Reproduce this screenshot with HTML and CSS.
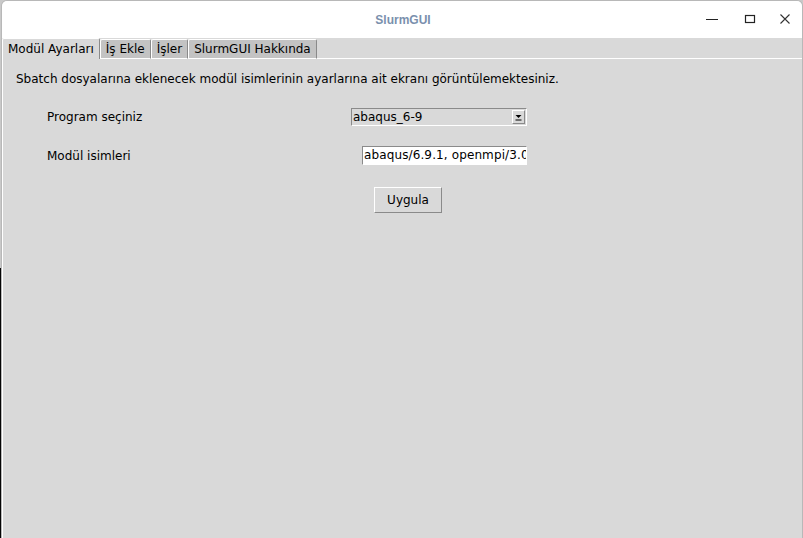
FILE: index.html
```html
<!DOCTYPE html>
<html lang="tr">
<head>
<meta charset="utf-8">
<link rel="stylesheet" href="styles.css">
</head>
<body>
<div class="window">
  <div class="titlebar">
    <div class="title">SlurmGUI</div>
    <div class="controls">
      <svg class="ctl ctl-min" width="14" height="14" viewBox="0 0 14 14"><path d="M1 7.5H13" stroke="#222" stroke-width="1.2"/></svg>
      <svg class="ctl ctl-max" width="14" height="14" viewBox="0 0 14 14"><rect x="2.5" y="3.5" width="9" height="7" fill="none" stroke="#222" stroke-width="1.2"/></svg>
      <svg class="ctl" width="14" height="14" viewBox="0 0 14 14"><path d="M2.5 2.5L11.5 11.5M11.5 2.5L2.5 11.5" stroke="#333" stroke-width="1.1"/></svg>
    </div>
  </div>
  <div class="tabs">
    <div class="tab active">Modül Ayarları</div>
    <div class="tab">İş Ekle</div>
    <div class="tab">İşler</div>
    <div class="tab">SlurmGUI Hakkında</div>
    <div class="tabfill"></div>
  </div>
  <div class="panel">
    <p class="intro">Sbatch dosyalarına eklenecek modül isimlerinin ayarlarına ait ekranı görüntülemektesiniz.</p>
    <div class="row row1">
      <span class="label">Program seçiniz</span>
      <div class="combo">
        <span class="combo-text">abaqus_6-9</span>
        <span class="combo-btn"><svg width="9" height="8" viewBox="0 0 9 8"><path d="M1.5 2H7.5L4.5 5Z" fill="#000"/><path d="M1.5 7H7.5" stroke="#000" stroke-width="1"/></svg></span>
      </div>
    </div>
    <div class="row row2">
      <span class="label">Modül isimleri</span>
      <div class="entry">abaqus/6.9.1, openmpi/3.0</div>
    </div>
    <div class="btnrow">
      <div class="button">Uygula</div>
    </div>
  </div>
</div>
</body>
</html>
```
FILE: styles.css
```css
html, body {
  margin: 0;
  padding: 0;
}
body {
  width: 803px;
  height: 538px;
  overflow: hidden;
  background: linear-gradient(#c9c9c9 0, #c9c9c9 268px, #050505 268px);
  font-family: "DejaVu Sans", sans-serif;
  font-size: 12px;
  color: #000;
}
.window {
  margin: 1px 1px 0 2px;
  height: 537px;
  background: #d9d9d9;
  border-radius: 5px 5px 0 0;
  overflow: hidden;
  display: flex;
  flex-direction: column;
  box-shadow: 0 0 0 1px #b8b8b8;
}
.titlebar {
  height: 37px;
  background: #ffffff;
  display: flex;
  align-items: center;
  position: relative;
}
.title {
  flex: 1;
  text-align: center;
  font-family: "Liberation Sans", sans-serif;
  font-weight: bold;
  font-size: 12px;
  color: #7a90ad;
  padding-left: 2px;
}
.controls {
  position: absolute;
  right: 10px;
  top: 11px;
  display: flex;
  gap: 16px;
}
.ctl {
  display: block;
}
.ctl-min { margin-right: 8px; }
.ctl-max { margin-right: 5px; }
.tabs {
  display: flex;
  height: 21px;
  align-items: flex-end;
}
.tab {
  line-height: 18px;
  padding: 0 5px;
  background: #c3c3c3;
  border-top: 1px solid #ffffff;
  border-left: 1px solid #ffffff;
  border-right: 1px solid #8a8a8a;
  border-bottom: 1px solid #ffffff;
  border-radius: 2px 2px 0 0;
  box-sizing: border-box;
  height: 20px;
}
.tab.active {
  background: #d9d9d9;
  height: 21px;
  line-height: 20px;
  border-bottom: none;
  padding: 0 5px;
}
.tabfill {
  flex: 1;
  border-bottom: 1px solid #ffffff;
  height: 0;
}
.panel {
  flex: 1;
  border-left: 1px solid #ffffff;
  padding: 13px 0 0 13px;
}
.intro {
  margin: 0;
  line-height: 14px;
}
.row {
  display: flex;
  align-items: center;
  margin-left: 31px;
}
.label {
  width: 272px;
}
.row1 {
  margin-top: 22px;
  height: 18px;
}
.row2 {
  margin-top: 20px;
  height: 19px;
}
.combo {
  margin-left: 32px;
  width: 176px;
  height: 18px;
  box-sizing: border-box;
  border-top: 1px solid #8a8a8a;
  border-left: 1px solid #8a8a8a;
  border-right: 1px solid #ffffff;
  border-bottom: 1px solid #ffffff;
  display: flex;
  align-items: center;
  background: #d9d9d9;
}
.combo-text {
  flex: 1;
  padding-left: 1px;
  line-height: 16px;
}
.combo-btn {
  width: 13px;
  height: 14px;
  margin-right: 1px;
  box-sizing: border-box;
  border-top: 1px solid #ffffff;
  border-left: 1px solid #ffffff;
  border-right: 1px solid #8a8a8a;
  border-bottom: 1px solid #8a8a8a;
  display: flex;
  align-items: center;
  justify-content: center;
}
.combo-btn svg {
  display: block;
}
.entry {
  margin-left: 43px;
  width: 165px;
  height: 19px;
  box-sizing: border-box;
  background: #ffffff;
  border-top: 1px solid #8a8a8a;
  border-left: 1px solid #8a8a8a;
  border-right: 1px solid #ffffff;
  border-bottom: 1px solid #ffffff;
  padding-left: 1px;
  line-height: 17px;
  letter-spacing: 0.12px;
  white-space: nowrap;
  overflow: hidden;
}
.btnrow {
  display: flex;
  margin-top: 22px;
  padding-left: 358px;
}
.button {
  width: 68px;
  height: 26px;
  box-sizing: border-box;
  border-top: 1px solid #ffffff;
  border-left: 1px solid #ffffff;
  border-right: 1px solid #8a8a8a;
  border-bottom: 1px solid #8a8a8a;
  text-align: center;
  line-height: 24px;
}
```
